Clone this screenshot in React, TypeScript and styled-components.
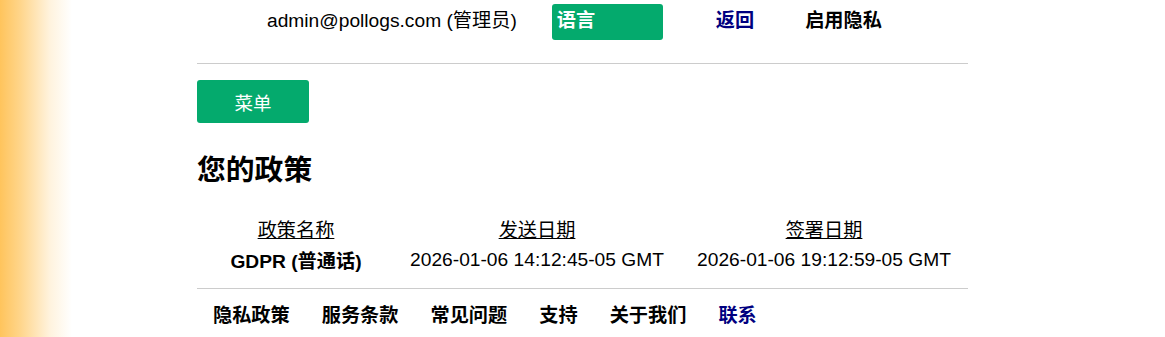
import styled, { createGlobalStyle } from "styled-components";

const GlobalStyle = createGlobalStyle`
  html, body {
    margin: 0;
    padding: 0;
  }
  body {
    font-family: "Liberation Sans", "Noto Sans CJK SC", Arial, sans-serif;
    color: #000;
    background: linear-gradient(to right, #ffc45c 0px, #ffd58a 20px, #fff3de 50px, #ffffff 72px) no-repeat;
    min-height: 337px;
  }
`;

const policies = [
  {
    name: "GDPR (普通话)",
    sent: "2026-01-06 14:12:45-05 GMT",
    signed: "2026-01-06 19:12:59-05 GMT",
  },
];

const footerLinks = ["隐私政策", "服务条款", "常见问题", "支持", "关于我们", "联系"];

export default function App() {
  return (
    <>
      <GlobalStyle />
      <Page>
        <TopBar>
          <Email>admin@pollogs.com (管理员)</Email>
          <LangBtn>语言</LangBtn>
          <NavLink $link>返回</NavLink>
          <NavLink>启用隐私</NavLink>
        </TopBar>
        <Rule />
        <MenuBtn>菜单</MenuBtn>
        <Title>您的政策</Title>
        <Table>
          <colgroup>
            <col style={{ width: 164 }} />
            <col style={{ width: 318 }} />
            <col style={{ width: 256 }} />
          </colgroup>
          <thead>
            <tr>
              <Th>政策名称</Th>
              <Th>发送日期</Th>
              <Th>签署日期</Th>
            </tr>
          </thead>
          <tbody>
            {policies.map((p) => (
              <tr key={p.name}>
                <Td $bold>{p.name}</Td>
                <Td>{p.sent}</Td>
                <Td>{p.signed}</Td>
              </tr>
            ))}
          </tbody>
        </Table>
        <Rule $bottom />
        <Footer>
          {footerLinks.map((l) => (
            <FooterLink key={l} $link={l === "联系"}>
              {l}
            </FooterLink>
          ))}
        </Footer>
      </Page>
    </>
  );
}

const Page = styled.div`
  margin-left: 197px;
  width: 771px;
  font-size: 19.2px;
`;
const TopBar = styled.div`
  display: flex;
  align-items: center;
  padding: 4px 0 0 70px;
  height: 36px;
  line-height: 22px;
`;
const Email = styled.span`
  margin-right: 35px;
  margin-top: -2px;
`;
const LangBtn = styled.div`
  box-sizing: border-box;
  width: 111px;
  height: 36px;
  background-color: #04aa6d;
  color: #fff;
  font-weight: 700;
  border-radius: 3px;
  padding: 6px 0 0 5px;
  margin-right: 53px;
`;
const NavLink = styled.span<{ $link?: boolean }>`
  font-weight: 700;
  color: ${(p) => (p.$link ? "#000080" : "#000")};
  margin-right: 51px;
  margin-top: -2px;
`;
const Rule = styled.hr<{ $bottom?: boolean }>`
  border: none;
  border-top: 1px solid #cccccc;
  margin: ${(p) => (p.$bottom ? "13px 0 0" : "23px 0 0")};
  height: 0;
`;
const MenuBtn = styled.button`
  display: block;
  width: 112px;
  height: 43px;
  margin-top: 16px;
  border: none;
  border-radius: 3px;
  background-color: #04aa6d;
  color: #fff;
  font-family: inherit;
  font-size: 18.5px;
  padding: 0;
`;
const Title = styled.h1`
  font-size: 28.8px;
  font-weight: 700;
  margin: 27px 0 0;
  line-height: 40px;
`;
const Table = styled.table`
  table-layout: fixed;
  border-collapse: collapse;
  margin: 24px 0 0 17px;
`;
const Th = styled.th`
  font-weight: 400;
  text-decoration: underline;
  text-align: center;
  padding: 0;
  height: 30px;
  white-space: nowrap;
`;
const Td = styled.td<{ $bold?: boolean }>`
  font-weight: ${(p) => (p.$bold ? 700 : 400)};
  text-align: center;
  padding: 0;
  height: 31px;
  white-space: nowrap;
`;
const Footer = styled.div`
  display: flex;
  gap: 32px;
  padding: 11px 0 0 16px;
`;
const FooterLink = styled.span<{ $link?: boolean }>`
  font-weight: 700;
  color: ${(p) => (p.$link ? "#000080" : "#000")};
`;
